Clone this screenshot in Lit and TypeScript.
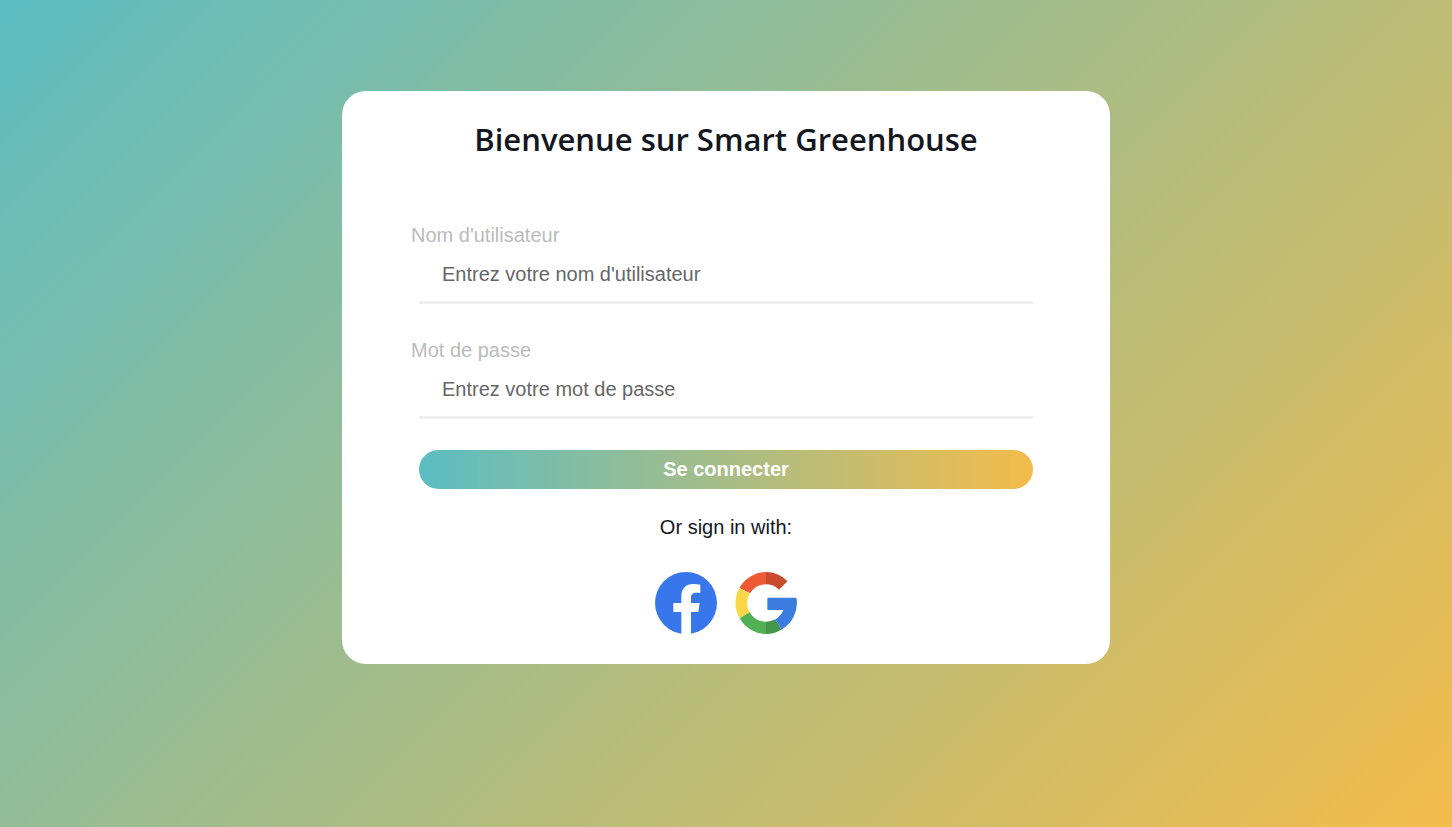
import { LitElement, html, css } from "lit";
import { customElement } from "lit/decorators.js";

@customElement("app-root")
export class AppRoot extends LitElement {
  static styles = css`
    :host {
      display: block;
      font-family: "Liberation Sans", Arial, sans-serif;
      font-size: 20px;
      line-height: 24px;
      color: #14171f;
    }
    .page {
      box-sizing: border-box;
      min-height: 100vh;
      padding: 91px 24px 24px;
      background: linear-gradient(135deg, #5cbdc2, #f3bc4b);
    }
    .card {
      box-sizing: border-box;
      max-width: 768px;
      margin: 0 auto;
      padding: 28px 69px 30px;
      border-radius: 24px;
      background: #fff;
    }
    .title {
      margin: 0 0 64px;
      font-family: "Open Sans", "Noto Sans", sans-serif;
      font-size: 31px;
      line-height: 40px;
      font-weight: 600;
      text-align: center;
    }
    .form {
      display: flex;
      flex-direction: column;
    }
    .field {
      display: flex;
      flex-direction: column;
      margin-bottom: 34px;
    }
    .field:last-of-type {
      margin-bottom: 31px;
    }
    .label {
      color: #bbb;
    }
    .input {
      box-sizing: border-box;
      height: 57px;
      margin: 0 8px;
      padding: 0 23px;
      border: 0;
      border-bottom: 3px solid #efefef;
      background: transparent;
      font: inherit;
      color: #333;
      outline: none;
    }
    .input::placeholder {
      color: #666;
      opacity: 1;
    }
    .submit {
      height: 39px;
      margin: 0 8px;
      padding: 0 0 2px;
      border: 0;
      border-radius: 20px;
      background: linear-gradient(90deg, #5cbdc2, #f3bc4b);
      font: inherit;
      font-weight: 700;
      color: #fff;
      cursor: pointer;
    }
    .alt {
      margin: 26px 0 33px;
      text-align: center;
    }
    .social {
      display: flex;
      justify-content: center;
      gap: 18px;
    }
    .provider {
      padding: 0;
      border: 0;
      background: none;
      cursor: pointer;
    }
    .logo {
      display: block;
      width: 62px;
      height: 62px;
    }
  `;

  render() {
    return html`
      <main class="page">
        <section class="card">
          <h1 class="title">Bienvenue sur Smart Greenhouse</h1>
          <form class="form" @submit=${(e: Event) => e.preventDefault()}>
            <div class="field">
              <label class="label" for="user">Nom d'utilisateur</label>
              <input class="input" id="user" type="text" placeholder="Entrez votre nom d'utilisateur" />
            </div>
            <div class="field">
              <label class="label" for="pass">Mot de passe</label>
              <input class="input" id="pass" type="password" placeholder="Entrez votre mot de passe" />
            </div>
            <button class="submit" type="submit">Se connecter</button>
          </form>
          <p class="alt">Or sign in with:</p>
          <div class="social">
            <button class="provider" type="button" aria-label="Facebook">
              <svg class="logo" viewBox="0 0 186 186" aria-hidden="true">
                <circle cx="93" cy="93" r="93" fill="#3876eb" />
                <path
                  fill="#fff"
                  d="M79 187V120H55V93H79V73C79 49 93 36 115 36C123 36 130 37 136 38V62H124C112 62 108 68 108 77V93H134L130 120H108V187Z"
                />
              </svg>
            </button>
            <button class="provider" type="button" aria-label="Google">
              <svg class="logo" viewBox="0 0 186 186" aria-hidden="true">
                <path fill="#ee5a36" d="M13 48A93 93 0 0 1 93 0V37A56 56 0 0 0 45 64Z" />
                <path fill="#c94b2d" d="M93 0A92 92 0 0 1 156 26V29L132 53A56 56 0 0 0 93 37Z" />
                <path fill="#fad747" d="M13 48A93 93 0 0 0 14 139L44 121A56 56 0 0 1 44 65Z" />
                <path fill="#51b053" d="M14 139A93 93 0 0 0 93 186V149A56 56 0 0 1 44 121Z" />
                <path fill="#459648" d="M93 186A93 93 0 0 0 139 173L121 142A56 56 0 0 1 93 149Z" />
                <path fill="#3a7cdf" d="M97 80Q97 77 100 77H181Q184 77 185 81A93 93 0 0 1 139 173L121 142A56 56 0 0 0 145 114H100Q97 114 97 111Z" />
              </svg>
            </button>
          </div>
        </section>
      </main>
    `;
  }
}
